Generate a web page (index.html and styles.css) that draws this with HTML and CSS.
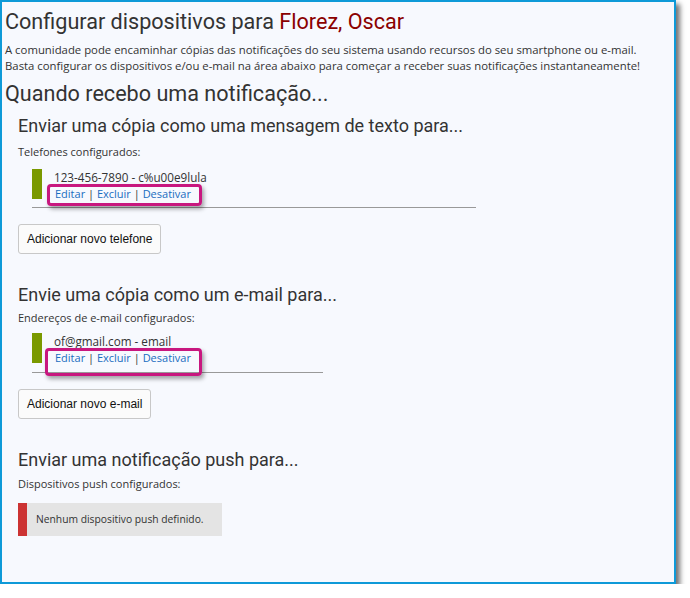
FILE: index.html
```html
<!DOCTYPE html>
<html lang="pt">
<head>
<meta charset="utf-8">
<title>Configurar dispositivos</title>
<link rel="stylesheet" href="styles.css">
</head>
<body>
<div class="frame">
  <h1 class="title">Configurar dispositivos para <span class="name">Florez, Oscar</span></h1>
  <p class="intro">A comunidade pode encaminhar cópias das notificações do seu sistema usando recursos do seu smartphone ou e-mail.<br>Basta configurar os dispositivos e/ou e-mail na área abaixo para começar a receber suas notificações instantaneamente!</p>
  <h2 class="subtitle">Quando recebo uma notificação...</h2>

  <section class="group">
    <h3 class="group-title">Enviar uma cópia como uma mensagem de texto para...</h3>
    <div class="label">Telefones configurados:</div>
    <div class="list list-phone">
      <div class="item">
        <div class="bar"></div>
        <div class="item-body">
          <div class="item-text">123-456-7890 - c%u00e9lula</div>
          <div class="links"><a href="#">Editar</a> | <a href="#">Excluir</a> | <a href="#">Desativar</a></div>
          <div class="highlight"></div>
        </div>
      </div>
    </div>
    <button class="btn">Adicionar novo telefone</button>
  </section>

  <section class="group group-email">
    <h3 class="group-title">Envie uma cópia como um e-mail para...</h3>
    <div class="label">Endereços de e-mail configurados:</div>
    <div class="list list-email">
      <div class="item">
        <div class="bar"></div>
        <div class="item-body">
          <div class="item-text">of@gmail.com - email</div>
          <div class="links"><a href="#">Editar</a> | <a href="#">Excluir</a> | <a href="#">Desativar</a></div>
          <div class="highlight highlight-2"></div>
        </div>
      </div>
    </div>
    <button class="btn">Adicionar novo e-mail</button>
  </section>

  <section class="group group-push">
    <h3 class="group-title">Enviar uma notificação push para...</h3>
    <div class="label">Dispositivos push configurados:</div>
    <div class="empty">Nenhum dispositivo push definido.</div>
  </section>
</div>
</body>
</html>
```

FILE: styles.css
```css
html, body {
  margin: 0;
  padding: 0;
  background: #ffffff;
}
.frame {
  box-sizing: border-box;
  width: 676px;
  height: 584px;
  border: 2px solid #0e9ad8;
  background: #f7f9fe;
  box-shadow: 4px 4px 5px rgba(0,0,0,0.55);
  padding: 6px 3px 0 3px;
  color: #333;
  font-family: "Open Sans", "Noto Sans", sans-serif;
}
.title {
  font-family: Roboto, sans-serif;
  font-weight: 400;
  font-size: 21.6px;
  line-height: 28px;
  margin: 0;
  color: #333;
}
.name {
  color: #8b0000;
}
.intro {
  margin: 6px 0 0 0;
  font-size: 11.35px;
  line-height: 16px;
  color: #333;
}
.subtitle {
  font-family: Roboto, sans-serif;
  font-weight: 400;
  font-size: 21.6px;
  line-height: 28px;
  margin: 6px 0 0 0;
  color: #333;
}
.group {
  padding-left: 13px;
}
.group-title {
  font-family: Roboto, sans-serif;
  font-weight: 400;
  font-size: 18px;
  line-height: 24px;
  margin: 6px 0 0 0;
  color: #333;
}
.label {
  font-size: 11px;
  line-height: 16px;
  margin-top: 6px;
}
.group-email .label {
  margin-top: 3px;
}
.group-push .label {
  margin-top: 4px;
}
.list {
  margin: 9px 0 0 14px;
  border-bottom: 1px solid #999;
  padding-bottom: 5px;
}
.list-phone { width: 444px; }
.list-email {
  width: 291px;
  margin-top: 7px;
  padding-bottom: 6px;
}
.item {
  display: flex;
  gap: 12px;
}
.bar {
  width: 10px;
  background: #7a9900;
  margin-bottom: 3px;
}
.item-body {
  position: relative;
  font-size: 11px;
  line-height: 16px;
}
.item-text {
  color: #333;
  font-size: 11.7px;
  line-height: 17px;
}
.links {
  color: #333;
  padding-left: 1px;
}
.links a {
  color: #1a6dc0;
  text-decoration: none;
}
.highlight {
  position: absolute;
  left: -7px;
  top: 15px;
  width: 149px;
  height: 16px;
  border: 3px solid #c8177f;
  border-radius: 4px;
  box-shadow: 2px 3px 4px rgba(0,0,0,0.35);
}
.highlight-2 {
  left: -9px;
  top: 15px;
  width: 151px;
  height: 22px;
}
.btn {
  display: block;
  margin-top: 16px;
  height: 30px;
  padding: 0 8px;
  font-family: "Liberation Sans", Arial, sans-serif;
  font-size: 12px;
  color: #111;
  background: #fbfbfb;
  border: 1px solid #c8c8c8;
  border-radius: 3px;
}
.group + .group {
  margin-top: 29px;
}
.empty {
  margin-top: 11px;
  width: fit-content;
  background: #e4e4e4;
  border-left: 9px solid #cc3333;
  padding: 8px 18px 8px 9px;
  font-size: 10.3px;
  line-height: 17px;
  color: #333;
}
```
